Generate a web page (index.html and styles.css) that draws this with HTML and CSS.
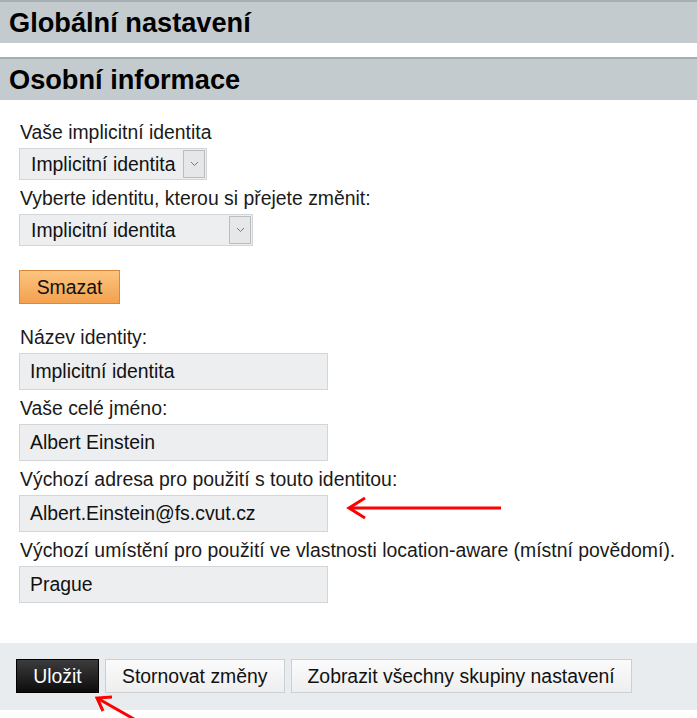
FILE: index.html
```html
<!DOCTYPE html>
<html lang="cs">
<head>
<meta charset="utf-8">
<title>Globální nastavení</title>
<link rel="stylesheet" href="styles.css">
</head>
<body>
<div class="page">
  <h2 class="section-head">Globální nastavení</h2>
  <h2 class="section-head second">Osobní informace</h2>
  <div class="form">
    <div class="label">Vaše implicitní identita</div>
    <div class="select select-narrow">
      <span class="select-text">Implicitní identita</span>
      <span class="select-arrow"><svg width="9" height="6" viewBox="0 0 9 6"><path d="M1 1 L4.5 4.5 L8 1" fill="none" stroke="#777" stroke-width="1"/></svg></span>
    </div>
    <div class="label">Vyberte identitu, kterou si přejete změnit:</div>
    <div class="select select-wide">
      <span class="select-text">Implicitní identita</span>
      <span class="select-arrow"><svg width="9" height="6" viewBox="0 0 9 6"><path d="M1 1 L4.5 4.5 L8 1" fill="none" stroke="#777" stroke-width="1"/></svg></span>
    </div>
    <div class="delete-row"><button class="btn-orange">Smazat</button></div>
    <div class="label">Název identity:</div>
    <div class="input">Implicitní identita</div>
    <div class="label">Vaše celé jméno:</div>
    <div class="input">Albert Einstein</div>
    <div class="label">Výchozí adresa pro použití s touto identitou:</div>
    <div class="input">Albert.Einstein@fs.cvut.cz</div>
    <div class="label">Výchozí umístění pro použití ve vlastnosti location-aware (místní povědomí).</div>
    <div class="input">Prague</div>
  </div>
  <div class="footer">
    <button class="btn btn-dark">Uložit</button>
    <button class="btn">Stornovat změny</button>
    <button class="btn">Zobrazit všechny skupiny nastavení</button>
  </div>
  <svg class="arrows" width="697" height="718" viewBox="0 0 697 718">
    <line x1="350" y1="508" x2="501" y2="508" stroke="#f00" stroke-width="3"/>
    <polyline points="365,498 349,508 365,518" fill="none" stroke="#f00" stroke-width="3"/>
    <line x1="97" y1="698" x2="134" y2="719" stroke="#f00" stroke-width="3"/>
    <polyline points="112,697 97,698 103,711" fill="none" stroke="#f00" stroke-width="3"/>
  </svg>
</div>
</body>
</html>
```
FILE: styles.css
```css
html, body {
  margin: 0;
  padding: 0;
  background: #fff;
}
body {
  font-family: "Liberation Sans", Arial, sans-serif;
  color: #222;
}
.page {
  position: relative;
  width: 697px;
  height: 718px;
  overflow: hidden;
}
.section-head {
  margin: 0;
  height: 41px;
  line-height: 41px;
  padding-left: 9px;
  background: #c4cbce;
  border-top: 2px solid #a7aeb1;
  font-size: 27.2px;
  font-weight: bold;
  color: #000;
}
.section-head.second {
  margin-top: 14px;
}
.form {
  padding: 22px 19px 0 19px;
  height: 543px;
  box-sizing: border-box;
}
.label {
  font-size: 19.4px;
  line-height: 20px;
  margin-bottom: 6px;
  padding-left: 1px;
  color: #1a1a1a;
  white-space: nowrap;
}
.select {
  display: flex;
  align-items: stretch;
  height: 32px;
  box-sizing: border-box;
  background: #eceeef;
  border: 1px solid #d3d6d8;
  margin-bottom: 8px;
}
.select-narrow { width: 188px; }
.select-wide { width: 234px; }
.select-text {
  flex: 1;
  font-size: 19.4px;
  line-height: 30px;
  padding-left: 11px;
  color: #111;
  white-space: nowrap;
}
.select-arrow {
  width: 20px;
  margin: 1px 1px 1px 0;
  border: 1px solid #b9bdbf;
  background: #e5e7e8;
  display: flex;
  align-items: center;
  justify-content: center;
}
.delete-row {
  padding-top: 16px;
  padding-bottom: 23px;
}
.btn-orange {
  display: block;
  width: 101px;
  height: 34px;
  font-family: "Liberation Sans", Arial, sans-serif;
  font-size: 19.4px;
  color: #111;
  border: 1px solid #d9873b;
  background: linear-gradient(#fdc47e, #f3a14f);
  padding: 0;
  margin: 0;
}
.input {
  width: 309px;
  height: 37px;
  box-sizing: border-box;
  background: #eceeef;
  border: 1px solid #d3d6d8;
  font-size: 19.4px;
  line-height: 35px;
  padding-left: 10px;
  color: #111;
  margin-bottom: 8px;
  white-space: nowrap;
}
.footer {
  background: #e9ecee;
  height: 67px;
  box-sizing: border-box;
  padding: 16px 0 0 16px;
  display: flex;
  gap: 6px;
  align-items: flex-start;
}
.btn {
  height: 34px;
  padding: 0 16px;
  font-family: "Liberation Sans", Arial, sans-serif;
  font-size: 19.4px;
  color: #111;
  border: 1px solid #cdd0d2;
  background: linear-gradient(#fbfbfb, #eeeeee);
  margin: 0;
  white-space: nowrap;
}
.btn-dark {
  width: 83px;
  padding: 0;
  color: #fff;
  border: 1px solid #000;
  background: linear-gradient(#3c3c3c, #0c0c0c);
}
.arrows {
  position: absolute;
  left: 0;
  top: 0;
  pointer-events: none;
}
```
